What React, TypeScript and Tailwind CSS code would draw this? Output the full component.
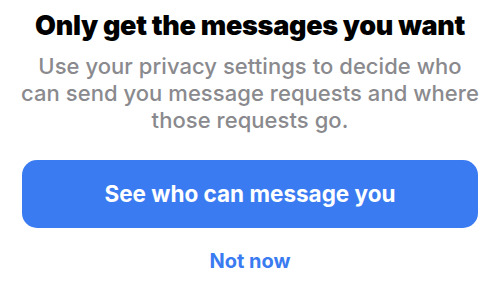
export default function App() {
    return (
        <div className="w-[500px] h-[288px] bg-white flex flex-col items-center font-['Inter',sans-serif] overflow-hidden">
            {/* 제목 */}
            <h1 className="mt-[9px] text-[27px] leading-[34px] font-black text-black tracking-[-0.3px]">
                Only get the messages you want
            </h1>

            {/* 설명 */}
            <p className="mt-[10px] text-center text-[22px] leading-[27px] font-medium text-[#8a8a8e] tracking-[0.05px] whitespace-nowrap">
                Use your privacy settings to decide who
                <br />
                can send you message requests and where
                <br />
                those requests go.
            </p>

            {/* 버튼 */}
            <button
                type="button"
                className="mt-[26px] w-[456px] h-[68px] rounded-[15px] bg-[#3a7bf2] text-white text-[22.5px] font-bold"
            >
                See who can message you
            </button>

            <button type="button" className="mt-[18px] text-[20px] font-bold text-[#3a7bf2]">
                Not now
            </button>
        </div>
    );
}
